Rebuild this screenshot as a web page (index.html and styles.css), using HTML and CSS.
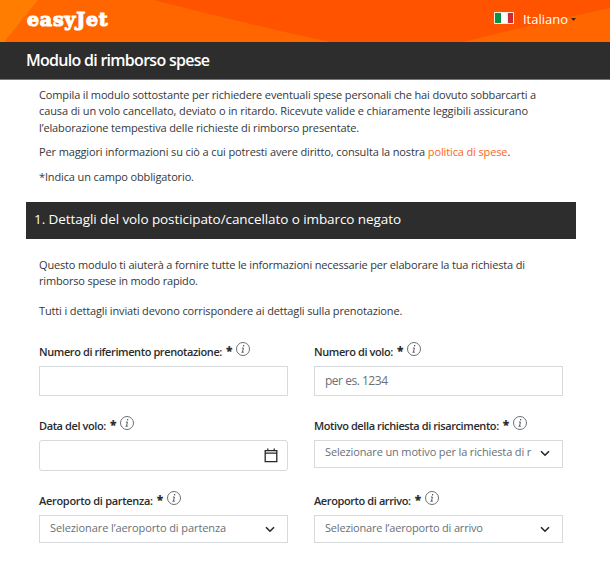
FILE: index.html
```html
<!DOCTYPE html>
<html lang="it">
<head>
<meta charset="utf-8">
<title>Modulo di rimborso spese</title>
<link rel="stylesheet" href="styles.css">
</head>
<body>
<svg class="defs" width="0" height="0" aria-hidden="true">
  <symbol id="info" viewBox="0 0 14 14"><circle cx="7" cy="7" r="6.5" fill="none" stroke="#6a7076" stroke-width="1"/><circle cx="7.6" cy="3.8" r=".75" fill="#444a50"/><path d="M5.9 6h1.5L6.5 10.2h1.3M5.5 10.3h1" fill="none" stroke="#444a50" stroke-width=".9"/></symbol>
  <symbol id="chevron" viewBox="0 0 10 7"><path d="M1 1.2 5 5.2 9 1.2" fill="none" stroke="#25282b" stroke-width="1.6"/></symbol>
</svg>
<header class="header">
  <svg class="header-art" viewBox="0 0 610 42" preserveAspectRatio="none" aria-hidden="true">
    <path fill="#ff6600" d="M0 0h610v42H0z"/>
    <path fill="#ff7d00" d="M0 0h38L4 42H0z"/>
    <path fill="#ff5300" d="M154 0H610V8Q540 23 463 42H331Q280 32 154 0z"/>
  </svg>
  <div class="logo">easyJet</div>
  <div class="language">
    <svg class="flag" viewBox="0 0 20 12" aria-hidden="true"><path fill="#f7e9dc" d="M0 0h20v12H0z"/><path fill="#079247" d="M1 1h6v10H1z"/><path fill="#fff" d="M7 1h6v10H7z"/><path fill="#cf2b37" d="M14 1h5v10h-5z"/></svg>
    <span class="language-name">Italiano</span>
    <svg class="caret" viewBox="0 0 5 3" aria-hidden="true"><path fill="#3a2418" d="M0 0h5L2.5 3z"/></svg>
  </div>
</header>
<h1 class="title"><span>Modulo di rimborso spese</span></h1>
<main>
  <section class="intro">
    <p><span class="l1">Compila il modulo sottostante per richiedere eventuali spese personali che hai dovuto sobbarcarti a</span><br><span class="l2">causa di un volo cancellato, deviato o in ritardo. Ricevute valide e chiaramente leggibili assicurano</span><br><span class="l3">l’elaborazione tempestiva delle richieste di rimborso presentate.</span></p>
    <p><span class="l4">Per maggiori informazioni su ciò a cui potresti avere diritto, consulta la nostra <a class="link">politica di spese</a>.</span></p>
    <p><span class="l5">*Indica un campo obbligatorio.</span></p>
  </section>
  <h2 class="section-title"><span>1. Dettagli del volo posticipato/cancellato o imbarco negato</span></h2>
  <section class="details">
    <p><span class="l6">Questo modulo ti aiuterà a fornire tutte le informazioni necessarie per elaborare la tua richiesta di</span><br><span class="l7">rimborso spese in modo rapido.</span></p>
    <p><span class="l8">Tutti i dettagli inviati devono corrispondere ai dettagli sulla prenotazione.</span></p>
  </section>
  <form class="form">
    <div class="field"><div class="label"><span class="f1">Numero di riferimento prenotazione:</span><b class="star">*</b><svg class="info"><use href="#info"/></svg></div><div class="input"></div></div>
    <div class="field"><div class="label"><span class="f2">Numero di volo:</span><b class="star">*</b><svg class="info"><use href="#info"/></svg></div><div class="input"><span class="p1">per es. 1234</span></div></div>
    <div class="field"><div class="label"><span class="f3">Data del volo:</span><b class="star">*</b><svg class="info"><use href="#info"/></svg></div><div class="input date"><svg class="calendar" viewBox="0 0 14 15"><path d="M1.2 2.7h11.6v11H1.2zM1 5.2h12M3.8.5v2.3M10.2.5v2.3" fill="none" stroke="#25282b" stroke-width="1.3"/></svg></div></div>
    <div class="field"><div class="label"><span class="f4">Motivo della richiesta di risarcimento:</span><b class="star">*</b><svg class="info"><use href="#info"/></svg></div><div class="input select reason"><span class="p2">Selezionare un motivo per la richiesta di r</span><svg class="chevron"><use href="#chevron"/></svg></div></div>
    <div class="field"><div class="label"><span class="f5">Aeroporto di partenza:</span><b class="star">*</b><svg class="info"><use href="#info"/></svg></div><div class="input select"><span class="p3">Selezionare l’aeroporto di partenza</span><svg class="chevron"><use href="#chevron"/></svg></div></div>
    <div class="field"><div class="label"><span class="f6">Aeroporto di arrivo:</span><b class="star">*</b><svg class="info"><use href="#info"/></svg></div><div class="input select"><span class="p4">Selezionare l’aeroporto di arrivo</span><svg class="chevron"><use href="#chevron"/></svg></div></div>
  </form>
</main>
</body>
</html>
```

FILE: styles.css
```css
* { box-sizing: border-box; }
body { margin: 0; height: 567px; overflow: hidden; background: #fff; color: #34383b; font-family: "Open Sans", "Noto Sans", sans-serif; font-size: 11px; line-height: 16px; white-space: nowrap; }
h1, h2, p { margin: 0; }
.defs { display: block; }
.header { position: relative; display: flex; justify-content: space-between; height: 42px; padding: 0 34px 0 27px; }
.header-art { position: absolute; inset: 0; width: 100%; height: 42px; }
.logo { position: relative; height: 40px; color: #fff; font: bold 19px/39px "DejaVu Serif", serif; letter-spacing: .75px; -webkit-text-stroke: 1.1px #fff; }
.language { position: relative; display: flex; align-items: center; height: 38px; color: #fff; font-size: 13px; }
.flag { width: 20px; height: 12px; margin: 0 9px 2px 0; }
.caret { width: 5px; height: 3px; margin-left: 3px; }
.title { height: 38px; padding-left: 26px; background: #2d2d2d; border-bottom: 1px solid #777; color: #fff; font-size: 16px; line-height: 37px; font-weight: 600; letter-spacing: -.72px; }
main { padding: 7px 34px 0 26px; }
.intro { height: 115px; padding-left: 13px; }
.intro p { margin-bottom: 8px; line-height: 16.4px; }
.l1, .l8 { letter-spacing: -.14px; }
.l2 { letter-spacing: -.1px; }
.l3, .l5 { letter-spacing: -.13px; }
.l4 { letter-spacing: -.13px; }
.l6 { letter-spacing: -.165px; }
.l7 { letter-spacing: -.18px; }
.link { color: #ff6420; }
.section-title { height: 37px; padding-left: 8px; background: #2d2d2d; color: #fff; font-size: 13.5px; font-weight: 400; line-height: 35px; letter-spacing: -.08px; }
.details { height: 103px; padding: 18px 0 0 13px; }
.details p { margin-bottom: 14px; }
.form { display: grid; grid-template-columns: 249px 249px; grid-template-rows: 74px 75px 60px; column-gap: 26px; padding-left: 13px; }
.label { display: flex; height: 24px; color: #292c2e; font-weight: 600; line-height: 20px; letter-spacing: -.4px; }
.f5 { letter-spacing: -.3px; }
.star { width: 6px; margin: -1px 4px 0 4px; font-size: 12px; font-weight: 800; line-height: 20px; }
.info { width: 14px; height: 14px; }
.input { display: flex; align-items: center; width: 249px; height: 30px; padding: 0 12px 0 10px; border: 1px solid #d7dadd; color: #687078; font-size: 12px; }
.p1 { letter-spacing: -.48px; }
.date { height: 31px; justify-content: flex-end; padding-right: 9px; border-radius: 3px; }
.calendar { width: 14px; height: 15px; }
.select { height: 28px; padding-bottom: 2px; justify-content: space-between; font-size: 11px; }
.p2 { letter-spacing: -.14px; }
.p3 { letter-spacing: -.09px; }
.p4 { letter-spacing: -.18px; }
.reason { padding-bottom: 4px; }
.chevron { width: 10px; height: 7px; margin-top: 3px; }
```
